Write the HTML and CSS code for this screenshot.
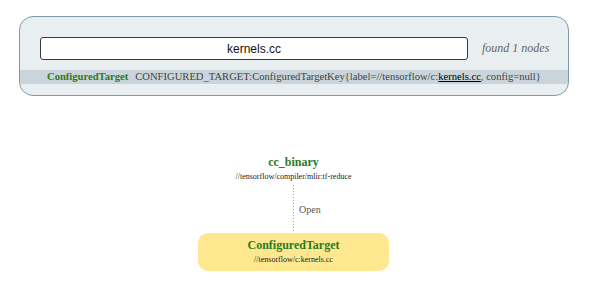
FILE: index.html
```html
<!DOCTYPE html>
<html lang="en">
<head>
<meta charset="UTF-8" />
<title>Graph search</title>
<link rel="stylesheet" href="styles.css">
</head>
<body>
  <div class="search-panel">
    <div class="search-row">
      <input class="search-input" type="text" value="kernels.cc" />
      <span class="search-count">found 1 nodes</span>
    </div>
    <div class="result-row">
      <span class="result-kind">ConfiguredTarget</span>
      <span class="result-key">CONFIGURED_TARGET:ConfiguredTargetKey{label=//tensorflow/c:<u class="match">kernels.cc</u>, config=null}</span>
    </div>
  </div>

  <div class="graph">
    <div class="node">
      <div class="node-title">cc_binary</div>
      <div class="node-label">//tensorflow/compiler/mlir:tf-reduce</div>
    </div>
    <div class="edge">
      <span class="edge-line"></span>
      <span class="edge-text">Open</span>
    </div>
    <div class="node node-selected">
      <div class="node-title">ConfiguredTarget</div>
      <div class="node-label">//tensorflow/c:kernels.cc</div>
    </div>
  </div>
</body>
</html>
```

FILE: styles.css
```css
*, *::before, *::after {
  box-sizing: border-box;
}
body {
  margin: 0;
  background: #fff;
  font-family: 'Liberation Serif', serif;
  color: #333;
}
/* SEARCH PANEL */
.search-panel {
  margin: 16px 0 0 19px;
  width: 550px;
  height: 80px;
  background: #e9eef1;
  border: 1px solid #7f9ba6;
  border-radius: 14px;
  padding-top: 20px;
  overflow: hidden;
}
.search-row {
  display: flex;
  align-items: center;
  padding-left: 20px;
}
.search-input {
  width: 428px;
  height: 23px;
  border: 1.5px solid #3a3a3a;
  border-radius: 3px;
  background: #fff;
  font-family: 'Liberation Sans', sans-serif;
  font-size: 12px;
  text-align: center;
  color: #111;
  padding: 0;
  outline: none;
}
.search-count {
  margin-left: 14px;
  font-style: italic;
  font-size: 12px;
  color: #666;
}
.result-row {
  margin-top: 10px;
  height: 14px;
  display: flex;
  align-items: center;
  padding-left: 27px;
  background: #c9d5da;
  font-size: 10.6px;
  line-height: 14px;
  white-space: nowrap;
}
.result-kind {
  font-weight: bold;
  color: #2d7a22;
  margin-right: 7px;
}
.result-key {
  color: #444;
}
.match {
  color: #000;
}
/* GRAPH */
.graph {
  margin-top: 59px;
  display: flex;
  flex-direction: column;
  align-items: center;
  padding-right: 3px;
}
.node {
  display: flex;
  flex-direction: column;
  align-items: center;
  color: #2d7a22;
}
.node-title {
  font-weight: bold;
  font-size: 12px;
  line-height: 14px;
}
.node-label {
  font-size: 8px;
  line-height: 11px;
  color: #222;
  margin-top: 2px;
}
.edge {
  position: relative;
  height: 51px;
  padding: 3px 0 2px;
}
.edge-line {
  display: block;
  width: 1px;
  height: 100%;
  background: repeating-linear-gradient(to bottom, #a6a6a6 0 1px, transparent 1px 3px);
}
.edge-text {
  position: absolute;
  left: 6px;
  top: 22px;
  font-size: 10px;
  color: #555;
}
.node-selected {
  width: 191px;
  height: 38px;
  background: #fee88f;
  border-radius: 10px;
  justify-content: center;
  padding-bottom: 1px;
}
```
